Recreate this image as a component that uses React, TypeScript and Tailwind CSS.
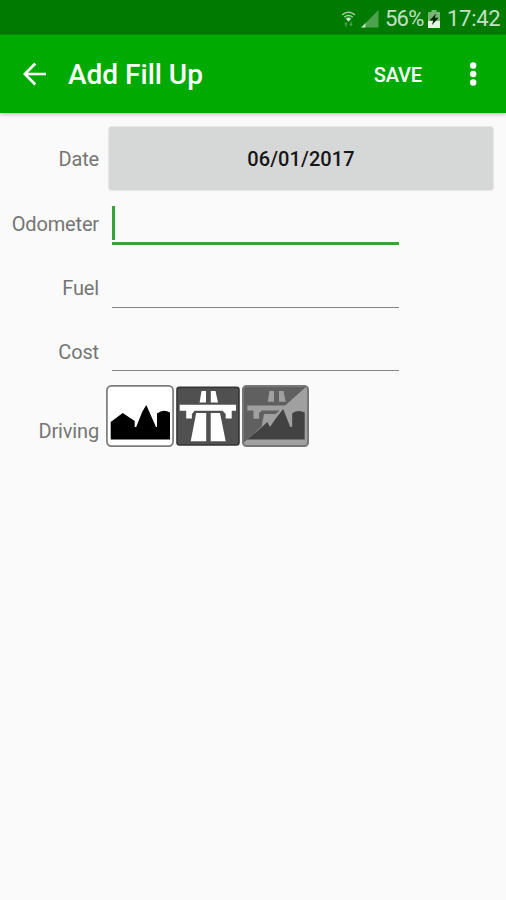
import type { ReactNode } from "react";

function StatusBar() {
  return (
    <div className="flex h-[34px] items-center justify-end bg-[#007a00] pr-[6px] pt-[3px] text-[#c3e0c3]">
      <svg className="mr-[5px] h-[18px] w-[15px]" viewBox="0 0 16 18">
        <g fill="none" stroke="#a5cfa5" strokeWidth="1.6">
          <path d="M1.2 4.6Q8 -.8 14.8 4.6" />
          <path d="M3.5 7Q8 3.6 12.5 7" />
        </g>
        <path d="M5 8.6Q8 6.3 11 8.6L8 12Z" fill="#c5e1c5" />
        <path d="M3.3 14.5L5.3 11.8L7.3 14.5H6V17H4.6V14.5ZM8.7 14.3H10V11.8H11.4V14.3H12.7L10.7 17Z" fill="#4da54d" />
      </svg>
      <svg className="mr-[6px] h-[18px] w-[18px]" viewBox="0 0 18 18">
        <path d="M17.5 0V17.5H0Z" fill="#4da24d" />
        <path d="M4.5 13V17.5H0Z" fill="#bddcbd" />
      </svg>
      <span className="w-[41px] whitespace-nowrap text-[22px] leading-6 tracking-[-0.8px]">56%</span>
      <svg className="ml-[2px] mr-[7px] h-[18px] w-[12px]" viewBox="0 0 12 18">
        <path d="M3.5 0H8.5V2H12V18H0V2H3.5Z" fill="#78b678" />
        <path d="M0 11H12V18H0Z" fill="#e6f3e6" />
        <path d="M8 3.5L1.6 10.6H5.2L4 15L10.6 7.8H6.9Z" fill="#032903" />
      </svg>
      <span className="w-[53px] whitespace-nowrap text-[22px] leading-6 tracking-[-0.3px]">17:42</span>
    </div>
  );
}

function AppBar() {
  return (
    <header className="flex h-[79px] items-center border-t border-[#009000] bg-[#00aa00] pl-[23px] pr-[29px] text-white shadow-[0_1px_4px_rgba(70,50,70,0.4)]">
      <svg className="h-[24px] w-[24px]" viewBox="0 0 24 24" fill="none" stroke="white" strokeWidth="2.7">
        <path d="M23 12H2M12.3 1.5L1.8 12L12.3 22.5" />
      </svg>
      <h1 className="ml-[21px] grow whitespace-nowrap pt-[2px] text-[28px] font-medium leading-8">Add Fill Up</h1>
      <button className="mr-[48px] pt-px text-[20px] font-medium leading-6 tracking-[-0.1px]">SAVE</button>
      <svg className="h-[24px] w-[7px]" viewBox="0 0 7 24" fill="white">
        <circle cx="3.2" cy="3.5" r="3.2" />
        <circle cx="3.2" cy="12" r="3.2" />
        <circle cx="3.2" cy="20.5" r="3.2" />
      </svg>
    </header>
  );
}

function Label({ children }: { children: ReactNode }) {
  return <span className="block w-[99px] shrink-0 text-right text-[20px] leading-6 tracking-[-0.15px] text-[#757575]">{children}</span>;
}

function CityIcon() {
  return (
    <svg className="h-[62px] w-[68px]" viewBox="0 0 68 62">
      <rect x=".9" y=".9" width="66.2" height="60.2" rx="4.5" fill="white" stroke="#7c7c7c" strokeWidth="1.7" />
      <path d="M4.7 54.6V37L16.7 28L28.7 36V42H30.2L36.4 26.5L40.3 20L50 42H51V28.4Q57.5 23.6 64 27.6V54.6Z" fill="black" />
    </svg>
  );
}

function HighwayIcon() {
  return (
    <svg className="h-[60px] w-[64px]" viewBox="0 0 64 60">
      <rect x="1" y="1.4" width="62" height="57.6" rx="2.5" fill="#505050" stroke="#353535" strokeWidth="1.6" />
      <g fill="white">
        <path d="M25.5 5H30V16.5H23.6ZM34.8 5H39.5L42 16.5H34.8Z" />
        <path d="M3.7 18.7H60V24.7H55.7V32.5H49.7V28L46.5 24.7H18.5L15.9 28V32.5H10.2V24.7H3.7Z" />
        <path d="M20.2 27H30.2V55.3H14.7ZM34.7 27H44L49.7 55.3H34.7Z" />
      </g>
    </svg>
  );
}

function MixedIcon() {
  return (
    <svg className="h-[62px] w-[67px]" viewBox="0 0 67 62">
      <rect x="1" y="1" width="65" height="60" rx="3.5" fill="#a0a0a0" />
      <path d="M4.5 1H65L4.5 55L1.5 58V4Q1.5 1 4.5 1Z" fill="#606060" />
      <g fill="#a0a0a0">
        <path d="M27.5 6H32V16.8H25.7ZM37 6H41.5L43.7 16.8H37Z" />
        <path d="M5.3 20.5H48L41 25.6H20L17 28V33.7H11.5V25.6H5.3Z" />
        <path d="M22 29H33V34L28 42L25.5 37L19.5 42Z" />
      </g>
      <path d="M5 54.6L20 42L25.3 37L28 42L33 34.5L41.2 24L48.2 42H50.2V28.2Q56.5 24 62.7 27.5V54.6Z" fill="#424242" />
      <rect x="1" y="1" width="65" height="60" rx="3.5" fill="none" stroke="#777" strokeWidth="2" />
    </svg>
  );
}

export default function App() {
  return (
    <div className="flex h-[900px] w-[506px] flex-col bg-[#fafafa] font-['Roboto',sans-serif]">
      <StatusBar />
      <AppBar />
      <main className="flex flex-col pt-[14px]">
        <div className="flex h-[63px] items-center">
          <Label>Date</Label>
          <button className="ml-[10px] h-[63px] w-[384px] rounded-[3px] bg-[#d6d7d7] pt-px text-[20px] font-medium tracking-[0.1px] text-[#161616] shadow-[0_0_2px_rgba(0,0,0,0.25)]">06/01/2017</button>
        </div>
        <div className="mt-[9px] flex h-[46px] items-start">
          <div className="flex h-[51px] items-center pb-[2px]"><Label>Odometer</Label></div>
          <div className="ml-[13px] flex h-[46px] w-[287px] items-start border-b-[3px] border-[#35a43a] pt-[7px]">
            <span className="h-[34px] w-[3px] bg-[#35a43a]" />
          </div>
        </div>
        <div className="mt-[17px] flex h-[46px] items-end">
          <div className="flex h-[46px] items-center pt-[5px]"><Label>Fuel</Label></div>
          <div className="ml-[13px] h-[46px] w-[287px] border-b border-[#858585]" />
        </div>
        <div className="mt-[17px] flex h-[46px] items-end">
          <div className="flex h-[46px] items-center pt-[7px]"><Label>Cost</Label></div>
          <div className="ml-[13px] h-[46px] w-[287px] border-b border-[#858585]" />
        </div>
        <div className="mt-[14px] flex h-[62px] items-center">
          <div className="pt-[30px]"><Label>Driving</Label></div>
          <div className="ml-[7px] flex items-center gap-[2px]">
            <CityIcon />
            <HighwayIcon />
            <MixedIcon />
          </div>
        </div>
      </main>
    </div>
  );
}
